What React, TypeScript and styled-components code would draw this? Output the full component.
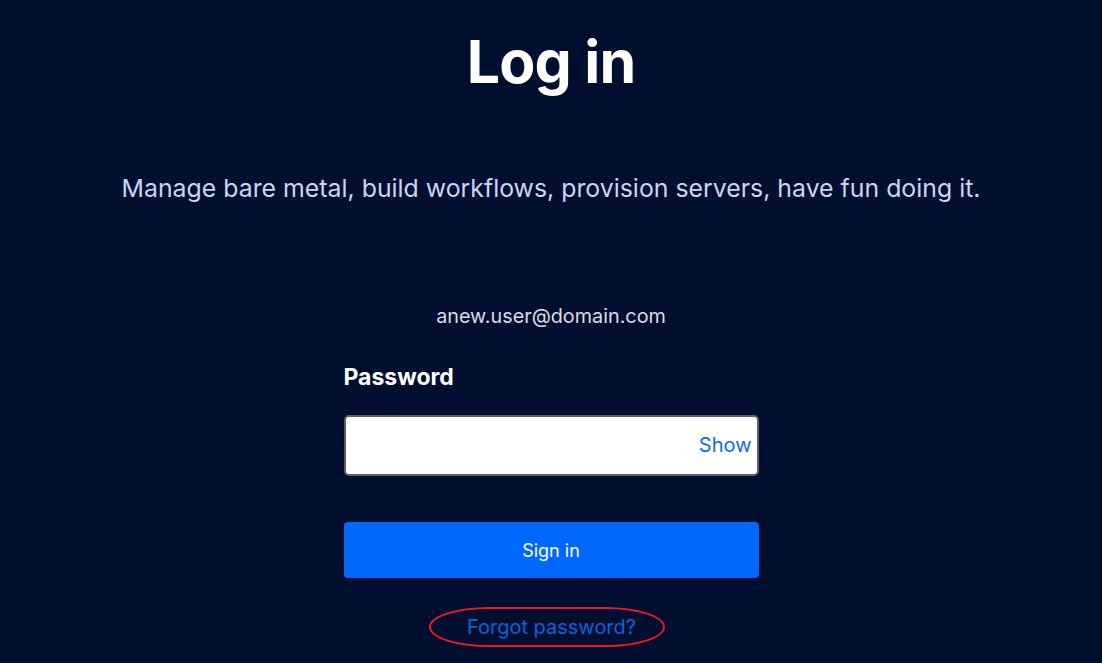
import React from 'react';
import styled, { createGlobalStyle } from 'styled-components';

const Global = createGlobalStyle`
  html, body {
    margin: 0;
    padding: 0;
    background: #000f30;
  }
  body {
    font-family: Inter, "Noto Sans", sans-serif;
  }
`;

const Page = styled.main`
  min-height: 663px;
  background: #000f30;
  display: flex;
  flex-direction: column;
  align-items: center;
  box-sizing: border-box;
  padding-top: 22px;
`;

const Title = styled.h1`
  margin: 0;
  font-size: 59px;
  line-height: 80px;
  font-weight: 700;
  color: #ffffff;
  letter-spacing: -0.8px;
`;

const Tagline = styled.p`
  margin: 70px 0 0;
  font-size: 24.85px;
  line-height: 32px;
  color: #c6d6f6;
`;

const Form = styled.form`
  width: 415px;
  margin-top: 99px;
  display: flex;
  flex-direction: column;
`;

const Email = styled.div`
  text-align: center;
  font-size: 19.8px;
  line-height: 26px;
  color: #d9dde6;
`;

const Label = styled.label`
  margin-top: 33px;
  font-size: 23px;
  line-height: 30px;
  font-weight: 700;
  color: #ffffff;
`;

const Field = styled.div`
  margin-top: 23px;
  height: 61px;
  box-sizing: border-box;
  background: #ffffff;
  border: 2px solid #5f5f5f;
  border-radius: 5px;
  display: flex;
  align-items: center;
`;

const Input = styled.input`
  flex: 1;
  min-width: 0;
  height: 100%;
  border: none;
  outline: none;
  background: transparent;
  padding: 0 12px;
  font-family: inherit;
  font-size: 18px;
`;

const ShowButton = styled.button`
  border: none;
  background: transparent;
  padding: 0 5px 2px 8px;
  font-family: inherit;
  font-size: 20px;
  color: #0a6cf5;
  cursor: pointer;
`;

const Submit = styled.button`
  margin-top: 46px;
  height: 56px;
  border: none;
  border-radius: 4px;
  background: #0068fe;
  color: #ffffff;
  font-family: inherit;
  font-size: 18px;
  cursor: pointer;
`;

/* red annotation ring drawn round the link in the screenshot */
const Forgot = styled.div`
  margin: 29px 0 0 -8px;
  align-self: center;
  display: flex;
  justify-content: center;
  align-items: center;
  width: 236px;
  height: 40px;
  box-sizing: border-box;
  padding-left: 9px;
  border: 2px solid #ec1a24;
  border-radius: 60px / 20px;
`;

const ForgotLink = styled.a`
  font-size: 20px;
  line-height: 28px;
  color: #0a63dc;
  text-decoration: none;
`;

export default function App() {
  return (
    <Page>
      <Global />
      <Title>Log in</Title>
      <Tagline>Manage bare metal, build workflows, provision servers, have fun doing it.</Tagline>
      <Form onSubmit={(e) => e.preventDefault()}>
        <Email>anew.user@domain.com</Email>
        <Label htmlFor="password">Password</Label>
        <Field>
          <Input id="password" type="password" />
          <ShowButton type="button">Show</ShowButton>
        </Field>
        <Submit type="submit">Sign in</Submit>
        <Forgot>
          <ForgotLink href="#">Forgot password?</ForgotLink>
        </Forgot>
      </Form>
    </Page>
  );
}
